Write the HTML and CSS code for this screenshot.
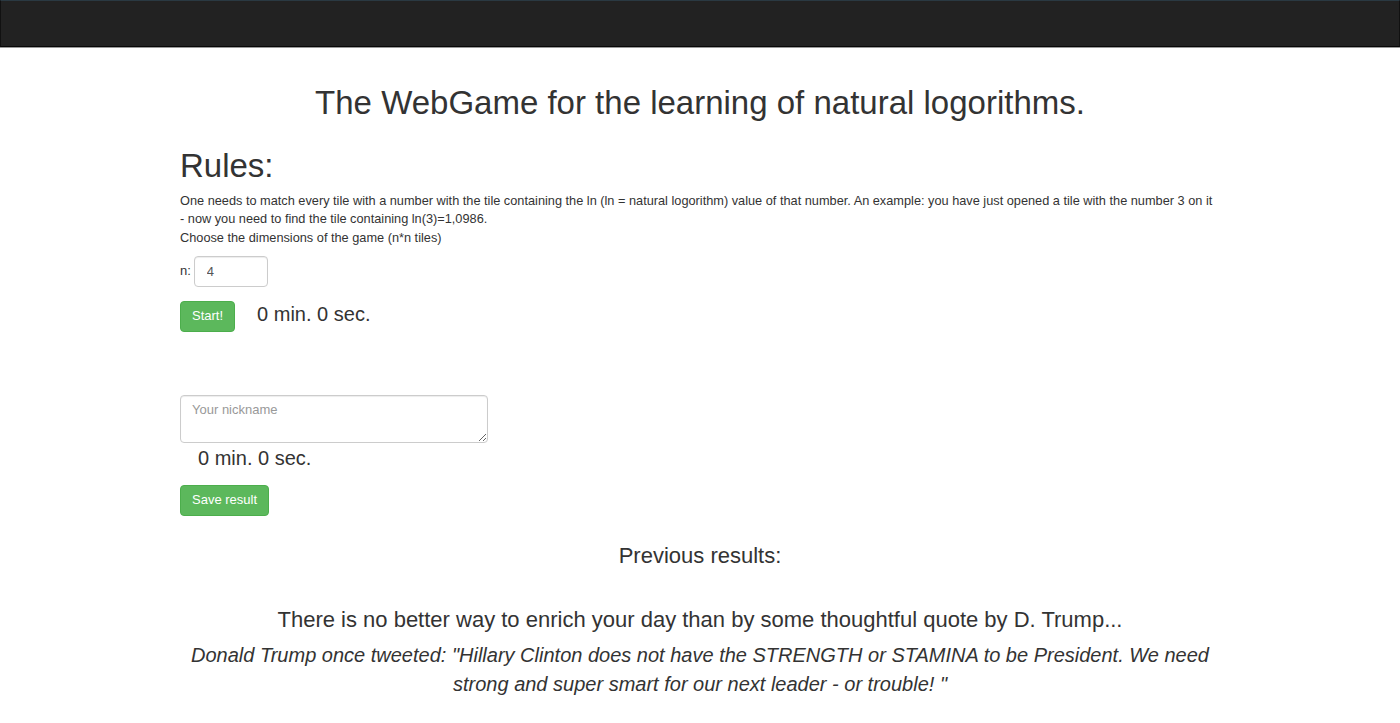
FILE: index.html
```html
<!DOCTYPE html>
<html>
<head>
<meta charset="utf-8">
<title>WebGame</title>
<link rel="stylesheet" href="styles.css">
</head>
<body>
<nav class="navbar"></nav>
<main class="container">
  <h2 class="title">The WebGame for the learning of natural logorithms.</h2>
  <h1 class="rules-heading">Rules:</h1>
  <div class="rules-text">
    <div>One needs to match every tile with a number with the tile containing the ln (ln = natural logorithm) value of that number. An example: you have just opened a tile with the number 3 on it - now you need to find the tile containing ln(3)=1,0986.</div>
    <div>Choose the dimensions of the game (n*n tiles)</div>
  </div>
  <div class="dim-row">
    <label class="dim-label" for="n">n:</label>
    <input class="dim-input" id="n" type="text" value="4">
  </div>
  <div class="start-row">
    <button class="btn">Start!</button>
    <span class="timer">0 min. 0 sec.</span>
  </div>
  <div class="save-block">
    <textarea class="nickname" placeholder="Your nickname"></textarea>
    <div class="timer timer-result">0 min. 0 sec.</div>
    <button class="btn">Save result</button>
  </div>
  <h3 class="prev">Previous results:</h3>
  <h3 class="quote-heading">There is no better way to enrich your day than by some thoughtful quote by D. Trump...</h3>
  <p class="quote">Donald Trump once tweeted: "Hillary Clinton does not have the STRENGTH or STAMINA to be President. We need strong and super smart for our next leader - or trouble! "</p>
</main>
</body>
</html>
```
FILE: styles.css
```css
html, body {
  margin: 0;
  padding: 0;
  background: #fff;
}
body {
  font-family: "Liberation Sans", Arial, Helvetica, sans-serif;
  font-size: 13px;
  line-height: 1.42857;
  color: #333;
}
.navbar {
  height: 45px;
  background: #222;
  border-top: 1px solid #2a3942;
  border-bottom: 1px solid #080808;
  border-left: 1px solid #111;
  border-right: 1px solid #111;
  box-shadow: 0 1px 0 #999;
}
.container {
  width: 1040px;
  margin: 0 auto;
}
.title {
  margin: 38px 0 0;
  font-size: 33px;
  font-weight: 400;
  line-height: 1.1;
  text-align: center;
}
.rules-heading {
  margin: 27px 0 0;
  font-size: 33px;
  font-weight: 400;
  line-height: 1.1;
}
.rules-text {
  margin-top: 7px;
  font-size: 12.75px;
  line-height: 18.5px;
}
.dim-row {
  display: flex;
  align-items: center;
  gap: 3px;
  margin-top: 9px;
}
.dim-label {
  font-size: 13px;
}
.dim-input {
  box-sizing: border-box;
  width: 74px;
  height: 31px;
  padding: 5px 12px;
  border: 1px solid #ccc;
  border-radius: 4px;
  font-family: inherit;
  font-size: 13px;
  color: #555;
  box-shadow: inset 0 1px 1px rgba(0,0,0,.075);
}
.start-row {
  display: flex;
  align-items: flex-start;
  gap: 22px;
  margin-top: 14px;
}
.btn {
  box-sizing: border-box;
  height: 31px;
  padding: 5px 11px;
  background: #5cb85c;
  border: 1px solid #4cae4c;
  border-radius: 4px;
  color: #fff;
  font-family: inherit;
  font-size: 13px;
  line-height: 1.42857;
  cursor: pointer;
}
.timer {
  font-size: 20px;
  line-height: 24px;
}
.start-row .timer {
  margin-top: 1px;
}
.save-block {
  margin-top: 63px;
}
.nickname {
  display: block;
  box-sizing: border-box;
  width: 308px;
  height: 48px;
  padding: 6px 11px;
  border: 1px solid #ccc;
  border-radius: 4px;
  font-family: inherit;
  font-size: 13px;
  color: #555;
  resize: vertical;
  box-shadow: inset 0 1px 1px rgba(0,0,0,.075);
}
.nickname::placeholder {
  color: #999;
}
.timer-result {
  margin: 3px 0 0 18px;
}
.save-block .btn {
  margin-top: 15px;
  padding: 5px 11px;
}
.prev {
  margin: 28px 0 0;
  font-size: 22px;
  font-weight: 400;
  line-height: 1.1;
  text-align: center;
}
.quote-heading {
  margin: 40px 0 0;
  font-size: 22px;
  font-weight: 400;
  line-height: 1.1;
  text-align: center;
}
.quote {
  margin: 9px 0 0;
  font-size: 20px;
  font-style: italic;
  line-height: 29px;
  text-align: center;
}
```
